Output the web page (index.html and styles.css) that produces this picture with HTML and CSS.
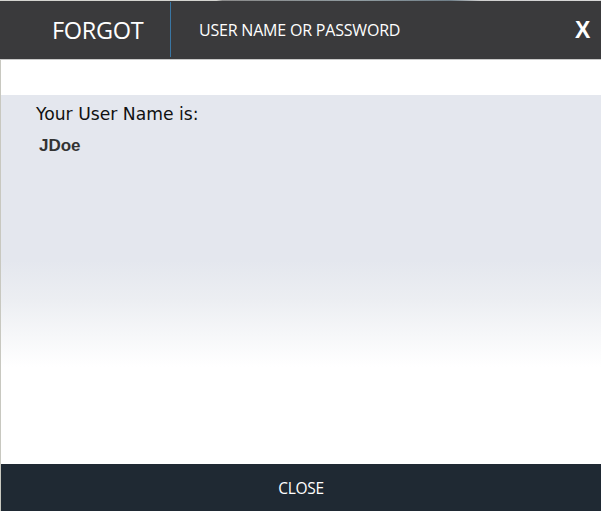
FILE: index.html
```html
<!DOCTYPE html>
<html>
<head>
<meta charset="utf-8">
<link rel="stylesheet" href="styles.css">
</head>
<body>
<div class="dialog">
  <div class="topstrip"></div>
  <header class="header">
    <div class="title">FORGOT</div>
    <div class="subtitle">USER NAME OR PASSWORD</div>
    <div class="close-x">X</div>
  </header>
  <div class="main">
    <div class="spacer"></div>
    <div class="panel">
      <div class="label">Your User Name is:</div>
      <div class="value">JDoe</div>
    </div>
  </div>
  <footer class="footer">CLOSE</footer>
</div>
</body>
</html>
```
FILE: styles.css
```css
html, body {
  margin: 0;
  padding: 0;
  background: #ffffff;
}
.dialog {
  width: 601px;
  height: 511px;
  display: flex;
  flex-direction: column;
  overflow: hidden;
}
.topstrip {
  height: 1px;
  background: linear-gradient(to right, #d4d4d0 0%, #d4d4d0 36%, #8a8a8a 37%, #8f9ba0 60%, #6f7e88 75%, #cfcfcf 80%, #d8d8d8 100%);
}
.header {
  height: 58px;
  background: #3a3a3c;
  display: flex;
  align-items: center;
  color: #ffffff;
  font-family: "Open Sans", "Noto Sans", sans-serif;
  border-bottom: 1px solid #c9c9c9;
}
.title {
  width: 171px;
  box-sizing: border-box;
  padding-left: 52px;
  font-size: 23.5px;
  letter-spacing: -0.3px;
  align-self: stretch;
  display: flex;
  align-items: center;
  border-right: 1px solid #3a76a3;
  margin: 1px 0 2px 0;
}
.subtitle {
  flex: 1;
  padding-left: 28px;
  font-size: 16px;
  letter-spacing: -0.2px;
}
.close-x {
  width: 12px;
  padding-right: 14px;
  font-size: 23px;
  font-weight: 600;
  font-family: "Liberation Sans", sans-serif;
}
.main {
  flex: 1;
  display: flex;
  flex-direction: column;
  border-left: 1px solid #c8c8c0;
}
.spacer {
  height: 35px;
}
.panel {
  flex: 1;
  background: linear-gradient(to bottom, #e4e7ee 0px, #e4e7ee 165px, #eceef2 205px, #f6f7f9 240px, #ffffff 272px, #ffffff 100%);
  padding: 8px 0 0 35px;
}
.label {
  font-family: "DejaVu Sans", sans-serif;
  font-size: 17.2px;
  color: #111111;
  line-height: 22px;
}
.value {
  font-family: "Liberation Sans", sans-serif;
  font-weight: bold;
  font-size: 17px;
  color: #333333;
  margin-top: 11px;
  padding-left: 3px;
}
.footer {
  height: 47px;
  background: #1f2933;
  color: #ffffff;
  display: flex;
  align-items: center;
  justify-content: center;
  font-family: "Open Sans", "Noto Sans", sans-serif;
  font-size: 15.5px;
  letter-spacing: -0.3px;
  border-left: 1px solid #c8c8c0;
}
```
